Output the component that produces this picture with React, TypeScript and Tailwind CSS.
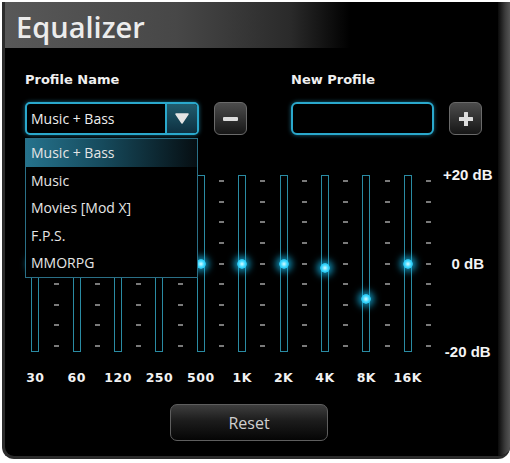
import React from "react";

const bands = [
  { label: "30", y: 88 },
  { label: "60", y: 88 },
  { label: "120", y: 88 },
  { label: "250", y: 88 },
  { label: "500", y: 88 },
  { label: "1K", y: 88 },
  { label: "2K", y: 88 },
  { label: "4K", y: 92 },
  { label: "8K", y: 123 },
  { label: "16K", y: 88 },
];

const profiles = ["Music + Bass", "Music", "Movies [Mod X]", "F.P.S.", "MMORPG"];

const sans = "font-['Open_Sans','Noto_Sans',sans-serif]";
const bold = "font-['DejaVu_Sans',sans-serif] font-bold";

function Dashes() {
  return (
    <div className="flex h-[177px] flex-col items-center justify-between py-[5px]">
      {Array.from({ length: 9 }).map((_, i) => (
        <div key={i} className="h-[2px] w-[5px] bg-[#7a7a7a]" />
      ))}
    </div>
  );
}

function Band({ label, y }: { label: string; y: number }) {
  return (
    <div className="flex flex-col items-center">
      <div className="relative h-[177px] w-[8px] border border-[#2a8ba3]">
        <div
          className="absolute left-1/2 h-[10px] w-[10px] -translate-x-1/2 -translate-y-1/2 rounded-full bg-[radial-gradient(circle,#d8fbff_0%,#3ad8ff_45%,#0aa6d6_100%)] shadow-[0_0_7px_3px_rgba(20,190,240,0.75)]"
          style={{ top: y }}
        />
      </div>
      <div className={`${bold} mt-[18px] whitespace-nowrap text-[12.5px] leading-[15px] tracking-[0.5px] text-[#f2f2f2]`}>
        {label}
      </div>
    </div>
  );
}

export default function App() {
  return (
    <div className="h-[463px] w-[510px] bg-white pl-[2px] pt-[2px]">
      <div className="flex h-[457px] w-[508px] overflow-hidden rounded-b-[12px] border-b-[3px] border-l-[3px] border-[#2c2c2c] bg-black">
        {/* main column */}
        <div className="relative flex w-[493px] flex-col">
          {/* Header */}
          <div className="h-[46px] bg-[linear-gradient(to_right,#585858_0%,#474747_35%,#2a2a2a_58%,#000_70%)] pl-[11px]">
            <h1 className={`${sans} pt-[6px] text-[29px] font-semibold leading-[38px] text-[#ececec]`}>Equalizer</h1>
          </div>

          {/* Profile row */}
          <div className="mt-[24px] flex pl-[20px]">
            <div className="w-[174px]">
              <div className={`${bold} text-[13px] leading-[16px] text-[#f0f0f0]`}>Profile Name</div>
              <div className="relative mt-[14px]">
                <div className="flex h-[33px] overflow-hidden rounded-[5px] border-2 border-[#2aa8cc] bg-black shadow-[0_0_4px_rgba(40,170,210,0.6)]">
                  <div className={`${sans} flex flex-1 items-center pl-[4px] text-[14px] text-[#eeeeee]`}>Music + Bass</div>
                  <div className="flex w-[32px] items-center justify-center border-l-2 border-[#2aa8cc] bg-[linear-gradient(to_bottom,#215c6e,#0e3040)]">
                    <svg width="14" height="11" viewBox="0 0 14 11">
                      <path d="M1 1 L13 1 L7 10 Z" fill="#e4e4e4" stroke="#e4e4e4" strokeWidth="1.5" strokeLinejoin="round" />
                    </svg>
                  </div>
                </div>
                {/* open menu */}
                <div className="absolute left-0 top-[36px] z-10 w-[173px] border border-[#2a6f86] bg-black">
                  {profiles.map((p, i) => (
                    <div
                      key={p}
                      className={`${sans} flex h-[27.5px] items-center pl-[5px] text-[14px] text-[#e6e6e6] ${
                        i === 0 ? "bg-[linear-gradient(to_right,#25728c_0%,#164a5c_45%,#060e12_100%)]" : ""
                      }`}
                    >
                      {p}
                    </div>
                  ))}
                </div>
              </div>
            </div>

            <button className="ml-[15px] mt-[30px] flex h-[33px] w-[33px] items-center justify-center rounded-[6px] border border-[#6a6a6a] bg-[linear-gradient(to_bottom,#4c4c4c,#161616)]">
              <div className="h-[4px] w-[15px] rounded-[1px] bg-[#dcdcdc]" />
            </button>

            <div className="ml-[44px] w-[143px]">
              <div className={`${bold} text-[13px] leading-[16px] text-[#f0f0f0]`}>New Profile</div>
              <div className="mt-[14px] h-[33px] rounded-[6px] border-2 border-[#2aa8cc] bg-black shadow-[0_0_4px_rgba(40,170,210,0.6)]" />
            </div>

            <button className="ml-[15px] mt-[30px] flex h-[33px] w-[33px] items-center justify-center rounded-[6px] border border-[#6a6a6a] bg-[linear-gradient(to_bottom,#4c4c4c,#161616)]">
              <svg width="14" height="14" viewBox="0 0 14 14">
                <rect x="5" y="0" width="4" height="14" rx="0.5" fill="#dcdcdc" />
                <rect x="0" y="5" width="14" height="4" rx="0.5" fill="#dcdcdc" />
              </svg>
            </button>
          </div>

          {/* Sliders */}
          <div className="mt-[40px] flex pl-[20px]">
            <div className="grid grid-cols-[repeat(20,20.7px)]">
              {bands.map((b) => (
                <React.Fragment key={b.label}>
                  <Band label={b.label} y={b.y} />
                  <Dashes />
                </React.Fragment>
              ))}
            </div>
            <div className="-mt-[8px] ml-[1px] flex h-[193px] w-[56px] flex-col items-center justify-between font-['Liberation_Sans',Arial,sans-serif] text-[15px] font-bold leading-[16px] text-[#f4f4f4]">
              <span>+20 dB</span>
              <span>0 dB</span>
              <span>-20 dB</span>
            </div>
          </div>

          {/* Reset */}
          <div className="mt-[19px] pl-[165px]">
            <button
              className={`${sans} h-[37px] w-[158px] rounded-[7px] border border-[#5e5e5e] bg-[linear-gradient(to_bottom,#3e3e3e_0%,#1c1c1c_45%,#050505_100%)] text-[16px] text-[#cfcfcf]`}
            >
              Reset
            </button>
          </div>
        </div>
        {/* right edge */}
        <div className="w-[12px] bg-[linear-gradient(to_right,#0a0a0a,#3c3c3c_60%,#555)]" />
      </div>
    </div>
  );
}
